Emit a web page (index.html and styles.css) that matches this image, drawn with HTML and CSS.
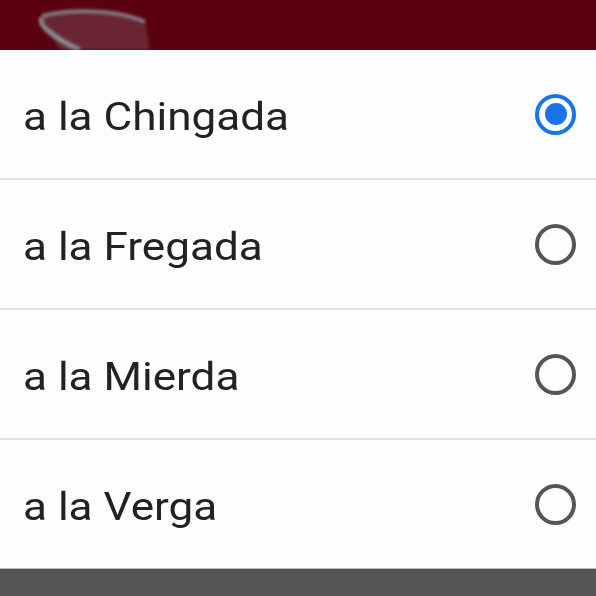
FILE: index.html
```html
<!DOCTYPE html>
<html lang="es">
<head>
  <meta charset="UTF-8" />
  <meta name="viewport" content="width=device-width, initial-scale=1.0"/>
  <title>Opciones</title>
  <link rel="stylesheet" href="styles.css">
</head>
<body>
  <div class="fondo">
    <svg class="taza" width="160" height="50" viewBox="0 0 160 50">
      <path d="M40 16 C70 8, 120 10, 145 22 L150 50 L60 50 Z" fill="rgba(150,150,150,0.25)"/>
      <path d="M42 18 C38 24, 50 36, 80 50" stroke="#8fa6a8" stroke-width="5" fill="none" opacity="0.8"/>
      <path d="M42 16 C70 8, 120 10, 145 22" stroke="#8fa6a8" stroke-width="4" fill="none" opacity="0.7"/>
    </svg>
  </div>

  <ul class="opciones">
    <li class="opcion">
      <span class="texto">a la Chingada</span>
      <span class="radio activo"></span>
    </li>
    <li class="opcion">
      <span class="texto">a la Fregada</span>
      <span class="radio"></span>
    </li>
    <li class="opcion">
      <span class="texto">a la Mierda</span>
      <span class="radio"></span>
    </li>
    <li class="opcion">
      <span class="texto">a la Verga</span>
      <span class="radio"></span>
    </li>
  </ul>

  <div class="pie"></div>
</body>
</html>
```

FILE: styles.css
```css
body {
  margin: 0;
  font-family: Roboto, 'Noto Sans', sans-serif;
  background: #555555;
  height: 596px;
  overflow: hidden;
}

.fondo {
  position: relative;
  height: 50px;
  background: #5a0010;
  overflow: hidden;
}

.taza {
  position: absolute;
  left: 0;
  top: 0;
  filter: blur(1.5px);
}

.opciones {
  list-style: none;
  margin: 0;
  padding: 0;
  background: #fdfdfd;
}

.opcion {
  display: flex;
  align-items: center;
  justify-content: space-between;
  height: 128px;
  padding: 0 20px 0 23px;
  border-bottom: 2px solid #dedede;
  font-size: 39px;
  color: #222222;
}

.opcion:last-child {
  border-bottom: 1px solid #bbbbbb;
}

.texto {
  display: inline-block;
  padding-top: 6px;
  transform: scaleX(1.13);
  transform-origin: left center;
}

.radio {
  width: 33px;
  height: 33px;
  border: 4px solid #555555;
  border-radius: 50%;
  box-sizing: content-box;
  display: flex;
  align-items: center;
  justify-content: center;
}

.radio.activo {
  border-color: #1a73e8;
}

.radio.activo::after {
  content: "";
  width: 22px;
  height: 22px;
  border-radius: 50%;
  background: #1a73e8;
}
```
